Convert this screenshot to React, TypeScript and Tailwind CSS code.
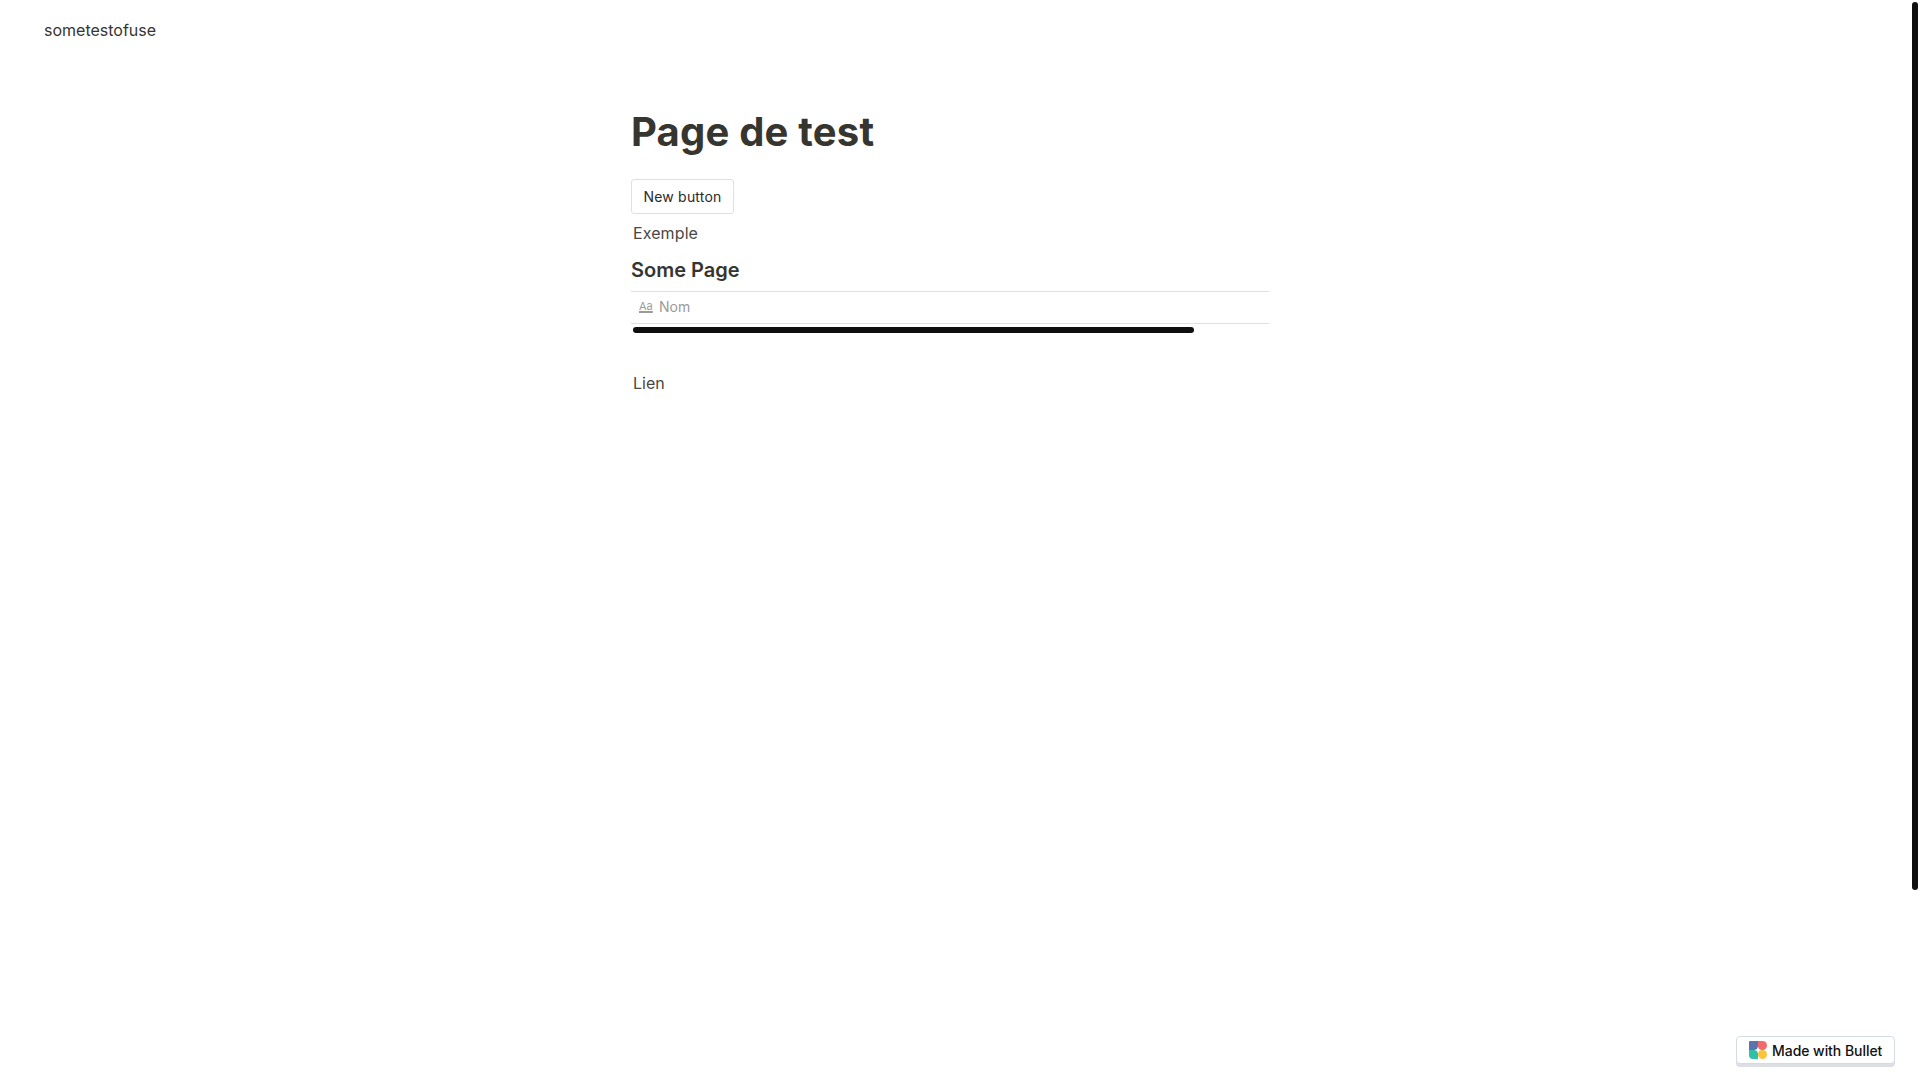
export default function App() {
  return (
    <div className="relative h-[1080px] w-full overflow-hidden bg-white font-['Inter',sans-serif] text-[#37352f]">
      {/* Site name */}
      <header className="px-[44px] pt-[18px]">
        <p className="text-[16px] leading-6">sometestofuse</p>
      </header>

      {/* Page body */}
      <main className="ml-[631px] w-[638px] pt-[66px]">
        <h1 className="text-[40px] font-bold leading-[48px] tracking-[0.2px]">Page de test</h1>

        <button className="mt-[23px] block h-[35px] w-[103px] rounded-[3px] border border-[#e0e0e0] bg-white text-[14px] font-normal tracking-[0.2px] text-[#2a2a2a]">
          New button
        </button>

        <p className="mt-[7px] px-[2px] text-[16px] leading-6 tracking-[0.1px] text-[#4a4843]">Exemple</p>

        <h2 className="mt-[11px] text-[20px] font-semibold leading-[28px]">Some Page</h2>

        {/* Table header */}
        <div className="mt-[7px] flex h-[33px] items-center border-y border-[#e0e0e0] pb-[2px] pl-[8px] text-[#9b9a97]">
          <span className="w-[20px] text-[11px] underline decoration-[1.5px] underline-offset-1">Aa</span>
          <span className="text-[14px]">Nom</span>
        </div>

        {/* Table horizontal scrollbar */}
        <div className="mt-[3px] ml-[2px] h-[6px] w-[561px] rounded-full bg-[#0f0f0f]" />

        <p className="mt-[38px] px-[2px] text-[16px] leading-6 text-[#4a4843]">Lien</p>
      </main>

      {/* Page scrollbar */}
      <div className="absolute right-[2px] top-[2px] h-[888px] w-[6px] rounded-full bg-[#0f0f0f]" />

      {/* Badge */}
      <div className="absolute right-[25px] top-[1036px] flex h-[28px] w-[159px] items-center gap-[5px] rounded-[4px] border border-[#d5dbe5] bg-white pl-[12px] text-[14px] font-[450] tracking-[-0.05px] text-[#111] shadow-[0_3px_0_#dcdfe3]">
        <svg width="18" height="18" viewBox="0 0 18 18">
          <path d="M1 0h8v9H0V1a1 1 0 0 1 1-1z" fill="#5b74b0" />
          <path d="M9 0h4.500a4.500 4.500 0 0 1 0 9H9z" fill="#f06a6a" />
          <path d="M0 9h9v9H4a4 4 0 0 1-4-4z" fill="#2fc0ab" />
          <path d="M9 9h4.500a4.500 4.500 0 1 1-4.500 4.500z" fill="#fcc43c" />
          <path d="M9 5.500 10 8l2.500 1L10 10l-1 2.500L8 10 5.500 9 8 8z" fill="#fff" />
        </svg>
        <span>Made with Bullet</span>
      </div>
    </div>
  );
}
